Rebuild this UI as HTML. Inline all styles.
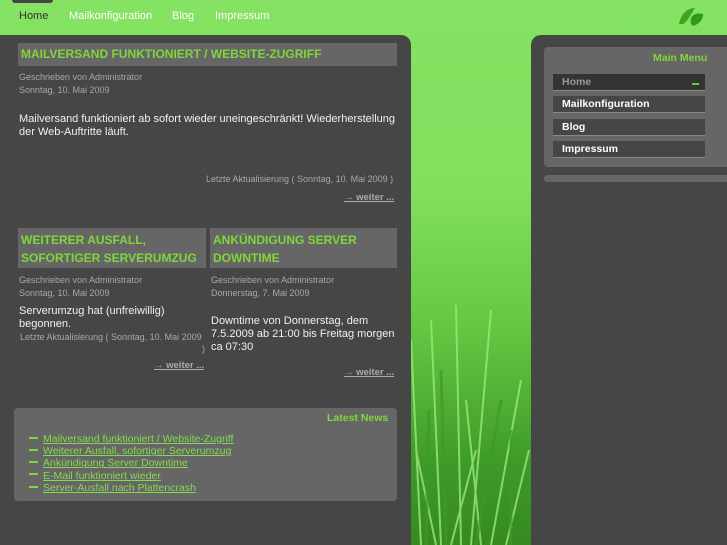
<!DOCTYPE html>
<html><head><style>
*{margin:0;padding:0;box-sizing:border-box}
body{width:727px;height:545px;overflow:hidden;position:relative;font-family:"Liberation Sans",sans-serif;background:linear-gradient(180deg,#85e262 0%,#82df5e 35%,#64c842 60%,#3f9a28 85%,#358a20 100%)}
.a{position:absolute}
.nav{top:10px;font-size:11px;color:#fff}
.lp{left:0;top:35px;width:411px;height:510px;background:#464646;border-top-right-radius:10px}
.rp{left:531px;top:35px;width:196px;height:510px;background:#464646;border-top-left-radius:10px}
.tb{background:#666;color:#7fd73a;font-weight:bold;font-size:12px;padding:3px 3px;line-height:18px;white-space:nowrap}
.meta{font-size:9px;color:#a8a8a8;line-height:13px}
.body{font-size:11px;color:#f0f0f0;line-height:13px}
.wr{font-size:9.5px;color:#aaa;font-weight:bold;text-decoration:underline}
.mi{left:553px;width:152px;height:17px;background:#464646;border-bottom:1px solid #888;color:#fff;font-weight:bold;font-size:10.5px;padding:2px 9px;line-height:13px}
.ln{font-size:10.5px;color:#84da4e;text-decoration:underline;line-height:12.2px}
.ln span{display:inline-block;width:9px;height:2px;background:#7fd73a;margin:0 5px 3px 0;vertical-align:middle}
</style></head><body>
<svg class="a" style="left:411px;top:150px" width="120" height="395">
<g stroke="#9be87a" stroke-width="2" fill="none" opacity=".8">
<path d="M30 395 L20 170"/><path d="M50 395 L45 155"/><path d="M60 395 L80 160"/><path d="M10 395 L0 190"/><path d="M80 395 L110 230"/><path d="M40 395 L65 300"/><path d="M95 395 L118 300"/><path d="M25 395 L5 300"/><path d="M70 395 L55 250"/></g>
<g stroke="#3d9a28" stroke-width="3" fill="none" opacity=".7">
<path d="M35 395 L30 220"/><path d="M65 395 L90 250"/><path d="M15 395 L18 260"/><path d="M100 395 L100 280"/></g></svg>
<div class="a" style="left:12px;top:0;width:41px;height:3px;background:#444;border-radius:0 0 4px 4px"></div>
<div class="a nav" style="left:19px;color:#333">Home</div>
<div class="a nav" style="left:69px">Mailkonfiguration</div>
<div class="a nav" style="left:172px">Blog</div>
<div class="a nav" style="left:215px">Impressum</div>
<svg class="a" style="left:677px;top:6px" width="28" height="20"><path d="M2 18 C4 8 10 2 18 2 C14 8 12 14 6 18Z" fill="#3aa81e"/><path d="M14 18 C12 10 18 6 26 8 C26 14 22 18 16 20Z" fill="#2f9a18"/></svg>
<div class="lp a"></div>
<div class="rp a"></div>
<div class="a tb" style="left:18px;top:43px;width:379px;height:23px;padding-top:2px">MAILVERSAND FUNKTIONIERT / WEBSITE-ZUGRIFF</div>
<div class="a meta" style="left:19px;top:71px">Geschrieben von Administrator<br>Sonntag, 10. Mai 2009</div>
<div class="a body" style="left:19px;top:113px;width:380px">Mailversand funktioniert ab sofort wieder uneingeschränkt! Wiederherstellung der Web-Auftritte läuft.</div>
<div class="a meta" style="left:206px;top:173px">Letzte Aktualisierung ( Sonntag, 10. Mai 2009 )</div>
<div class="a wr" style="left:344px;top:192px"><span style="text-decoration:none;font-weight:normal">→</span> weiter ...</div>
<div class="a tb" style="left:18px;top:228px;width:188px;height:40px">WEITERER AUSFALL,<br>SOFORTIGER SERVERUMZUG</div>
<div class="a tb" style="left:210px;top:228px;width:187px;height:40px">ANKÜNDIGUNG SERVER<br>DOWNTIME</div>
<div class="a meta" style="left:19px;top:274px">Geschrieben von Administrator<br>Sonntag, 10. Mai 2009</div>
<div class="a meta" style="left:211px;top:274px">Geschrieben von Administrator<br>Donnerstag, 7. Mai 2009</div>
<div class="a body" style="left:19px;top:305px;width:180px">Serverumzug hat (unfreiwillig) begonnen.</div>
<div class="a meta" style="left:20px;top:331px;white-space:nowrap">Letzte Aktualisierung ( Sonntag, 10. Mai 2009</div>
<div class="a meta" style="left:202px;top:343px">)</div>
<div class="a wr" style="left:154px;top:360px"><span style="text-decoration:none;font-weight:normal">→</span> weiter ...</div>
<div class="a body" style="left:211px;top:315px;width:186px">Downtime von Donnerstag, dem 7.5.2009 ab 21:00 bis Freitag morgen ca 07:30</div>
<div class="a wr" style="left:344px;top:367px"><span style="text-decoration:none;font-weight:normal">→</span> weiter ...</div>
<div class="a" style="left:14px;top:408px;width:383px;height:93px;background:#666;border-radius:4px"></div>
<div class="a" style="left:327px;top:412px;color:#7fd73a;font-weight:bold;font-size:10.5px">Latest News</div>
<div class="a" style="left:29px;top:433px">
<div class="ln"><span></span>Mailversand funktioniert / Website-Zugriff</div>
<div class="ln"><span></span>Weiterer Ausfall, sofortiger Serverumzug</div>
<div class="ln"><span></span>Ankündigung Server Downtime</div>
<div class="ln"><span></span>E-Mail funktioniert wieder</div>
<div class="ln"><span></span>Server-Ausfall nach Plattencrash</div>
</div>
<div class="a" style="left:544px;top:47px;width:183px;height:120px;background:#666;border-radius:4px 0 0 4px"></div>
<div class="a" style="left:653px;top:52px;color:#7fd73a;font-weight:bold;font-size:10.5px">Main Menu</div>
<div class="a mi" style="top:74px;background:#333;color:#999">Home<span style="position:absolute;right:6px;top:9px;width:7px;height:2px;background:#5fd22a"></span></div>
<div class="a mi" style="top:96px">Mailkonfiguration</div>
<div class="a mi" style="top:119px">Blog</div>
<div class="a mi" style="top:141px">Impressum</div>
<div class="a" style="left:544px;top:175px;width:183px;height:7px;background:#666;border-radius:3px 0 0 3px"></div>
</body></html>
